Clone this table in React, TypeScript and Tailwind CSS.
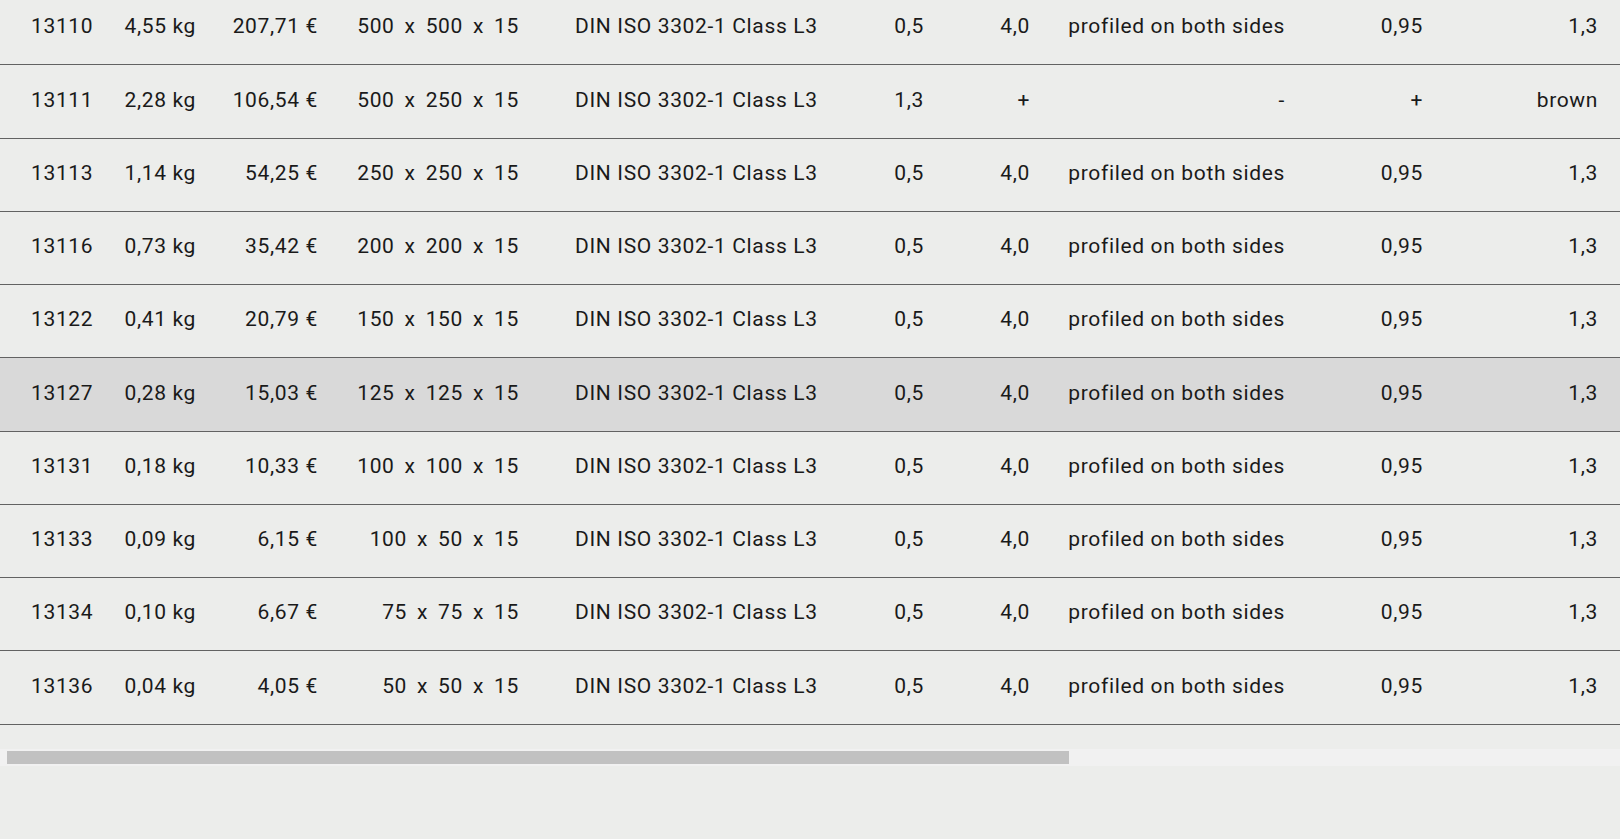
import React from 'react'

type Row = {
  id: string
  weight: string
  price: string
  dims: [string, string, string]
  norm: string
  a: string
  b: string
  profile: string
  c: string
  d: string
  active?: boolean
}

const rows: Row[] = [
  { id: '13110', weight: '4,55 kg', price: '207,71 €', dims: ['500', '500', '15'], norm: 'DIN ISO 3302-1 Class L3', a: '0,5', b: '4,0', profile: 'profiled on both sides', c: '0,95', d: '1,3' },
  { id: '13111', weight: '2,28 kg', price: '106,54 €', dims: ['500', '250', '15'], norm: 'DIN ISO 3302-1 Class L3', a: '1,3', b: '+', profile: '-', c: '+', d: 'brown' },
  { id: '13113', weight: '1,14 kg', price: '54,25 €', dims: ['250', '250', '15'], norm: 'DIN ISO 3302-1 Class L3', a: '0,5', b: '4,0', profile: 'profiled on both sides', c: '0,95', d: '1,3' },
  { id: '13116', weight: '0,73 kg', price: '35,42 €', dims: ['200', '200', '15'], norm: 'DIN ISO 3302-1 Class L3', a: '0,5', b: '4,0', profile: 'profiled on both sides', c: '0,95', d: '1,3' },
  { id: '13122', weight: '0,41 kg', price: '20,79 €', dims: ['150', '150', '15'], norm: 'DIN ISO 3302-1 Class L3', a: '0,5', b: '4,0', profile: 'profiled on both sides', c: '0,95', d: '1,3' },
  { id: '13127', weight: '0,28 kg', price: '15,03 €', dims: ['125', '125', '15'], norm: 'DIN ISO 3302-1 Class L3', a: '0,5', b: '4,0', profile: 'profiled on both sides', c: '0,95', d: '1,3', active: true },
  { id: '13131', weight: '0,18 kg', price: '10,33 €', dims: ['100', '100', '15'], norm: 'DIN ISO 3302-1 Class L3', a: '0,5', b: '4,0', profile: 'profiled on both sides', c: '0,95', d: '1,3' },
  { id: '13133', weight: '0,09 kg', price: '6,15 €', dims: ['100', '50', '15'], norm: 'DIN ISO 3302-1 Class L3', a: '0,5', b: '4,0', profile: 'profiled on both sides', c: '0,95', d: '1,3' },
  { id: '13134', weight: '0,10 kg', price: '6,67 €', dims: ['75', '75', '15'], norm: 'DIN ISO 3302-1 Class L3', a: '0,5', b: '4,0', profile: 'profiled on both sides', c: '0,95', d: '1,3' },
  { id: '13136', weight: '0,04 kg', price: '4,05 €', dims: ['50', '50', '15'], norm: 'DIN ISO 3302-1 Class L3', a: '0,5', b: '4,0', profile: 'profiled on both sides', c: '0,95', d: '1,3' },
]

export default function App() {
  return (
    <div className="min-h-screen w-full overflow-hidden bg-[#ecedeb] text-[#1a1a1a] font-['Roboto','Liberation_Sans',sans-serif] text-[21px] tracking-[0.65px]">
      {/* table, scrolled a little so the first row is cut */}
      <div className="-mt-[8px] overflow-hidden">
        <div className="w-[2470px]">
          {rows.map((r) => (
            <div
              key={r.id}
              className={`flex h-[73.25px] items-center border-b border-[#626262] pb-[2px] ${r.active ? 'bg-[#d9d9d9]' : ''}`}
            >
              <div className="w-[100px] shrink-0 pl-[31px]">{r.id}</div>
              <div className="w-[96px] shrink-0 text-right">{r.weight}</div>
              <div className="w-[122px] shrink-0 text-right">{r.price}</div>
              <div className="flex w-[201px] shrink-0 justify-end gap-[10px]">
                <span>{r.dims[0]}</span>
                <span>x</span>
                <span>{r.dims[1]}</span>
                <span>x</span>
                <span>{r.dims[2]}</span>
              </div>
              <div className="w-[330px] shrink-0 pl-[56px]">{r.norm}</div>
              <div className="w-[75px] shrink-0 text-right">{r.a}</div>
              <div className="w-[106px] shrink-0 text-right">{r.b}</div>
              <div className="w-[255px] shrink-0 text-right">{r.profile}</div>
              <div className="w-[138px] shrink-0 text-right">{r.c}</div>
              <div className="w-[175px] shrink-0 text-right">{r.d}</div>
            </div>
          ))}
        </div>
      </div>

      {/* horizontal scrollbar */}
      <div className="mt-[24px] h-[17px] w-full bg-[#f1f1f1] pt-[2px]">
        <div className="ml-[7px] h-[13px] w-[1062px] bg-[#c1c1c1]" />
      </div>
    </div>
  )
}
